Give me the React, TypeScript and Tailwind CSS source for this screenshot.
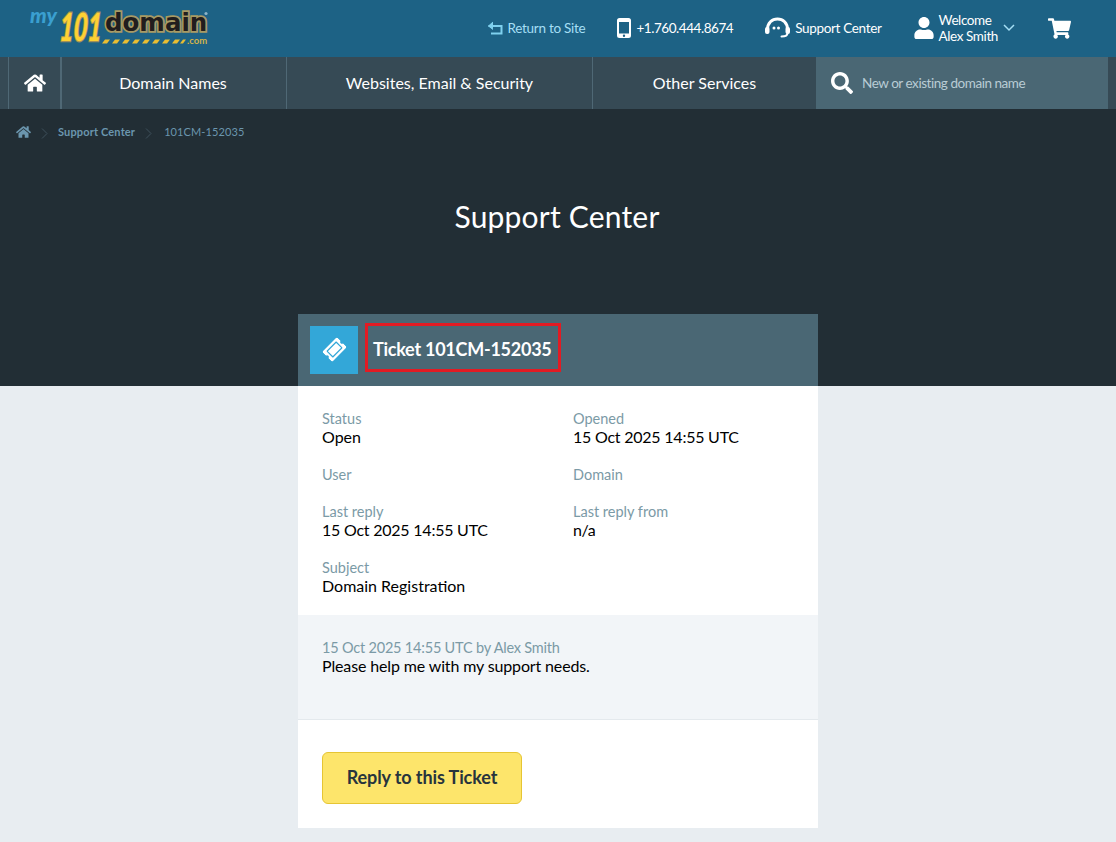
import { FaHome, FaSearch, FaShoppingCart, FaUser, FaTicketAlt } from "react-icons/fa";

const navItems = [
  { label: "Domain Names", width: "w-[225px] pr-[2px]" },
  { label: "Websites, Email & Security", width: "w-[306px]" },
  { label: "Other Services", width: "w-[224px]" },
];

const Field = ({ label, value, valueClass }: { label: string; value?: string; valueClass?: string }) => (
  <div>
    <div className="text-[14.5px] leading-[17px] text-[#7b9aa6]">{label}</div>
    {value && <div className={`text-[16px] leading-[19px] text-black ${valueClass ?? ""}`}>{value}</div>}
  </div>
);

const Logo = () => (
  <svg width="182" height="48" viewBox="0 0 182 48" className="shrink-0 overflow-visible">
    <text transform="translate(0 19) scale(1 0.95)" fontFamily="Lato" fontWeight="900" fontStyle="italic" fontSize="21" fill="#3a9fd0">my</text>
    <text transform="translate(29 37) scale(0.62 1) skewX(-6)" fontFamily="Lato" fontWeight="900" fontStyle="italic" fontSize="39" fill="#fdd133" stroke="#a09058" strokeWidth="2.500" paintOrder="stroke">101</text>
    <text transform="translate(75 27) scale(0.98 1)" fontFamily="DejaVu Sans" fontWeight="700" fontSize="25" fill="#211d1e" stroke="#a89a63" strokeWidth="3.500" paintOrder="stroke">domain</text>
    <circle cx="176" cy="9.500" r="1.600" fill="#8db4c8" />
    <path d="M72 39.500l3-4h5l-3 4zM82 39.500l3-4h5l-3 4zM92 39.500l3-4h5l-3 4zM102 39.500l3-4h5l-3 4zM112 39.500l3-4h5l-3 4zM122 39.500l3-4h5l-3 4zM132 39.500l3-4h5l-3 4zM142 39.500l3-4h5l-3 4zM150 39.500l3-4h3l-3 4z" fill="#e8bd32" />
    <text x="157" y="40" fontFamily="Lato" fontWeight="700" fontSize="9.500" fill="#d2b24a">.com</text>
  </svg>
);

const PhoneIcon = () => (
  <svg width="14" height="20" viewBox="0 0 14 20" fill="white">
    <path fillRule="evenodd" d="M2.500 0h9A2.500 2.500 0 0 1 14 2.500v15a2.500 2.500 0 0 1-2.500 2.500h-9A2.500 2.500 0 0 1 0 17.500v-15A2.500 2.500 0 0 1 2.500 0zM2 4v11.500h10V4zM7 16.500a1.200 1.200 0 1 0 0 2.400 1.200 1.200 0 0 0 0-2.400z" />
  </svg>
);

const HeadsetIcon = () => (
  <svg width="25" height="22" viewBox="0 0 25 22" fill="none">
    <path d="M2.500 12.500C2.500 6 7 2 12.500 2s10 4 10 10.500" stroke="white" strokeWidth="3" />
    <rect x="0" y="10" width="4.500" height="7" rx="2" fill="white" />
    <rect x="20.500" y="10" width="4.500" height="7" rx="2" fill="white" />
    <circle cx="9" cy="11" r="1.500" fill="white" />
    <circle cx="13.500" cy="11" r="1.500" fill="white" />
    <path d="M22.500 16c0 3-3 3.500-6 3.500" stroke="white" strokeWidth="2" strokeLinecap="round" />
  </svg>
);

const ReturnIcon = () => (
  <svg width="16" height="14" viewBox="0 0 16 14" fill="none" stroke="#7fd0ee" strokeWidth="2">
    <path d="M1.500 5H14.500V12.500H4" />
    <path d="M6 1L1.500 5 6 8.500" fill="#7fd0ee" strokeWidth="1" />
  </svg>
);

const Crumb = () => (
  <svg width="7" height="11" viewBox="0 0 7 11" fill="none" stroke="#3f515c" strokeWidth="1" className="mt-[3px]">
    <path d="M1 0.500l5 5-5 5" />
  </svg>
);

const App = () => {
  return (
    <div className="min-h-[842px] bg-[#e8edf1] font-['Lato',sans-serif]">
      <header className="flex h-[57px] items-center bg-[#1d6285] pb-[1px] pl-[30px] pr-[45px] text-[13.5px] text-white">
        <Logo />
        <div className="ml-auto flex items-center">
          <a className="flex items-center gap-[4px] tracking-[-0.27px] text-[#a5dff5]">
            <ReturnIcon />
            Return to Site
          </a>
          <a className="ml-[32px] flex items-center gap-[5px] tracking-[-0.45px]">
            <PhoneIcon />
            +1.760.444.8674
          </a>
          <a className="ml-[32px] flex items-center gap-[5px] tracking-[-0.33px]">
            <HeadsetIcon />
            Support Center
          </a>
          <div className="ml-[32px] flex items-center">
            <FaUser className="h-[22px] w-[20px]" />
            <div className="ml-[5px] leading-[16px] tracking-[-0.4px]">
              <div>Welcome</div>
              <div>Alex Smith</div>
            </div>
            <svg width="12" height="8" viewBox="0 0 12 8" fill="none" stroke="#a5dff5" strokeWidth="1.500" className="ml-[5px]">
              <path d="M1 1l5 5 5-5" />
            </svg>
          </div>
          <FaShoppingCart className="ml-[33px] h-[21px] w-[23px]" />
        </div>
      </header>

      <nav className="flex h-[52px] bg-[#364a55] px-2 text-white">
        <div className="flex w-[54px] items-center justify-center border-l border-r-2 border-[#4f6875]">
          <FaHome className="h-[22px] w-[22px]" />
        </div>
        {navItems.map((item) => (
          <div key={item.label} className={`${item.width} flex items-center justify-center border-r border-[#4f6875] text-[16px]`}>
            {item.label}
          </div>
        ))}
        <div className="-ml-px flex flex-1 items-center bg-[#4a6774] pl-[15px]">
          <FaSearch className="h-[22px] w-[22px]" />
          <span className="ml-[9px] text-[13.5px] tracking-[-0.45px] text-[#b9ccd4]">New or existing domain name</span>
        </div>
      </nav>

      <section className="h-[277px] bg-[#222e35] pt-[15px]">
        <div className="flex items-center pl-[16px] text-[11px] font-bold text-[#6b96ae]">
          <FaHome className="h-[14px] w-[15px]" />
          <span className="ml-[10px]"><Crumb /></span>
          <span className="ml-[10px] tracking-[0.15px]">Support Center</span>
          <span className="ml-[10px]"><Crumb /></span>
          <span className="ml-[12px] font-normal tracking-[0.1px]">101CM-152035</span>
        </div>
        <h1 className="mt-[57px] pr-[2px] text-center text-[30px] leading-[36px] tracking-[0.2px] text-white">Support Center</h1>
        <div className="mx-auto mt-[80px] flex h-[72px] w-[520px] items-center bg-[#4a6774] pl-[12px]">
          <div className="flex h-[48px] w-[48px] items-center justify-center bg-[#33a7d8]">
            <FaTicketAlt className="h-[21px] w-[21px] -rotate-45 text-white" />
          </div>
          <div className="mb-[4px] ml-[7px] flex h-[49px] w-[196px] items-center border-[3px] border-[#e21b23] pl-[5px] pt-[3px]">
            <h2 className="whitespace-nowrap text-[18px] font-bold tracking-[-0.25px] text-white">Ticket 101CM-152035</h2>
          </div>
        </div>
      </section>

      <main className="mx-auto w-[520px] bg-white">
        <div className="grid grid-cols-[251px_1fr] gap-y-[20px] px-[24px] pb-[20px] pt-[24px]">
          <Field label="Status" value="Open" />
          <Field label="Opened" value="15 Oct 2025 14:55 UTC" valueClass="tracking-[-0.23px]" />
          <Field label="User" />
          <Field label="Domain" />
          <Field label="Last reply" value="15 Oct 2025 14:55 UTC" valueClass="tracking-[-0.23px]" />
          <Field label="Last reply from" value="n/a" valueClass="tracking-[-0.4px]" />
          <Field label="Subject" value="Domain Registration" />
        </div>
        <div className="h-[105px] border-b border-[#e4e9ed] bg-[#f2f5f8] px-[24px] pt-[24px]">
          <div className="text-[14.5px] leading-[17px] tracking-[-0.2px] text-[#7b9aa6]">15 Oct 2025 14:55 UTC by Alex Smith</div>
          <div className="text-[16px] leading-[19px] tracking-[-0.14px] text-black">Please help me with my support needs.</div>
        </div>
        <div className="px-[24px] pb-[24px] pt-[32px]">
          <button className="h-[52px] w-[200px] rounded-[6px] border border-[#e6c533] bg-[#fde56b] pb-[2px] text-[18px] font-bold tracking-[-0.1px] text-[#27343d]">
            Reply to this Ticket
          </button>
        </div>
      </main>
    </div>
  );
};

export default App;
